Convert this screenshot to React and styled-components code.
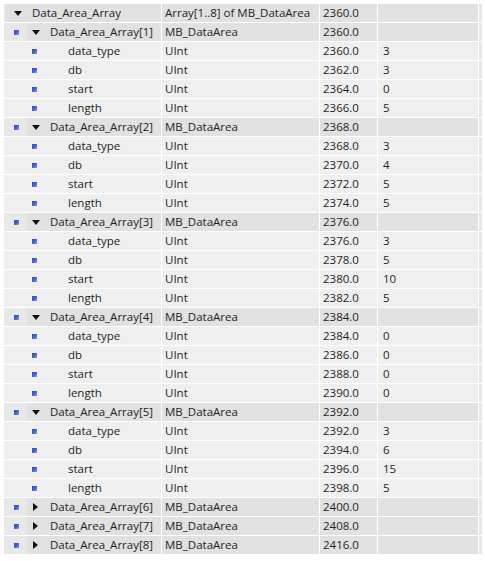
import React from 'react';
import styled, { createGlobalStyle } from 'styled-components';

const GlobalStyle = createGlobalStyle`
  body {
    margin: 0;
    background: #ffffff;
    font-family: "Open Sans", "Noto Sans", sans-serif;
  }
`;

const Page = styled.div`
  padding: 4px 0 0 4px;
  width: 485px;
  height: 561px;
  box-sizing: border-box;
  background: #ffffff;
`;

const Table = styled.div`
  display: flex;
  flex-direction: column;
  gap: 1px;
`;

const Row = styled.div`
  display: grid;
  grid-template-columns: 157px 157px 57px 100px 3px;
  column-gap: 1px;
  height: 18px;
  font-size: 11.5px;
  color: #1e1e1e;
  line-height: 18px;
`;

const Cell = styled.div`
  background: ${(p) => (p.$struct ? '#e1e1e1' : '#efefef')};
  padding-left: ${(p) => p.$pad || 3}px;
  white-space: nowrap;
  overflow: hidden;
`;

const NameCell = styled.div`
  display: flex;
  align-items: center;
  padding-left: 3px;
  white-space: nowrap;
  overflow: hidden;
  background: ${(p) =>
    p.$struct
      ? `linear-gradient(to right, #e8e8e8 ${p.$gutter}px, #e1e1e1 ${p.$gutter}px)`
      : '#efefef'};
`;

const Slot = styled.div`
  width: 18px;
  flex: none;
  height: 18px;
  display: flex;
  align-items: center;
  justify-content: center;
`;

const Square = styled.span`
  width: 5px;
  height: 5px;
  background: linear-gradient(135deg, #2a49b8 0%, #4a6ad8 60%, #8aa6ee 100%);
`;

const Down = styled.span`
  margin-left: 4px;
  width: 0;
  height: 0;
  border-left: 4px solid transparent;
  border-right: 4px solid transparent;
  border-top: 5px solid #111;
`;

const Right = styled.span`
  margin-left: 2px;
  width: 0;
  height: 0;
  border-top: 4px solid transparent;
  border-bottom: 4px solid transparent;
  border-left: 5px solid #111;
`;

const Label = styled.span`
  padding-left: 7px;
`;

const Extra = styled.div`
  background: #e6e6e6;
`;

const rows = [
  { level: 0, name: 'Data_Area_Array', type: 'Array[1..8] of MB_DataArea', off: '2360.0', val: '', toggle: 'down', square: false },
];

const arrays = [
  ['2360.0', [['2360.0', '3'], ['2362.0', '3'], ['2364.0', '0'], ['2366.0', '5']]],
  ['2368.0', [['2368.0', '3'], ['2370.0', '4'], ['2372.0', '5'], ['2374.0', '5']]],
  ['2376.0', [['2376.0', '3'], ['2378.0', '5'], ['2380.0', '10'], ['2382.0', '5']]],
  ['2384.0', [['2384.0', '0'], ['2386.0', '0'], ['2388.0', '0'], ['2390.0', '0']]],
  ['2392.0', [['2392.0', '3'], ['2394.0', '6'], ['2396.0', '15'], ['2398.0', '5']]],
  ['2400.0', null],
  ['2408.0', null],
  ['2416.0', null],
];

const fields = ['data_type', 'db', 'start', 'length'];

arrays.forEach(([off, children], i) => {
  rows.push({
    level: 1,
    name: `Data_Area_Array[${i + 1}]`,
    type: 'MB_DataArea',
    off,
    val: '',
    toggle: children ? 'down' : 'right',
    square: true,
  });
  if (children) {
    children.forEach(([o, v], j) => {
      rows.push({ level: 2, name: fields[j], type: 'UInt', off: o, val: v, toggle: null, square: true });
    });
  }
});

const TreeRow = ({ row }) => {
  const struct = row.toggle !== null;
  const slots = [];
  if (row.level === 0) {
    slots.push(<Slot key="t"><Down /></Slot>);
  } else if (row.level === 1) {
    slots.push(<Slot key="s"><Square /></Slot>);
    slots.push(<Slot key="t">{row.toggle === 'down' ? <Down /> : <Right />}</Slot>);
  } else {
    slots.push(<Slot key="e" />);
    slots.push(<Slot key="s"><Square /></Slot>);
    slots.push(<Slot key="t" />);
  }
  return (
    <Row>
      <NameCell $struct={struct} $gutter={row.level === 0 ? 1 : 23}>
        {slots}
        <Label>{row.name}</Label>
      </NameCell>
      <Cell $struct={struct}>{row.type}</Cell>
      <Cell $struct={struct}>{row.off}</Cell>
      <Cell $struct={struct} $pad={5}>{row.val}</Cell>
      <Extra />
    </Row>
  );
};

const App = () => (
  <>
    <GlobalStyle />
    <Page>
      <Table>
        {rows.map((r, i) => (
          <TreeRow key={i} row={r} />
        ))}
      </Table>
    </Page>
  </>
);

export default App;
